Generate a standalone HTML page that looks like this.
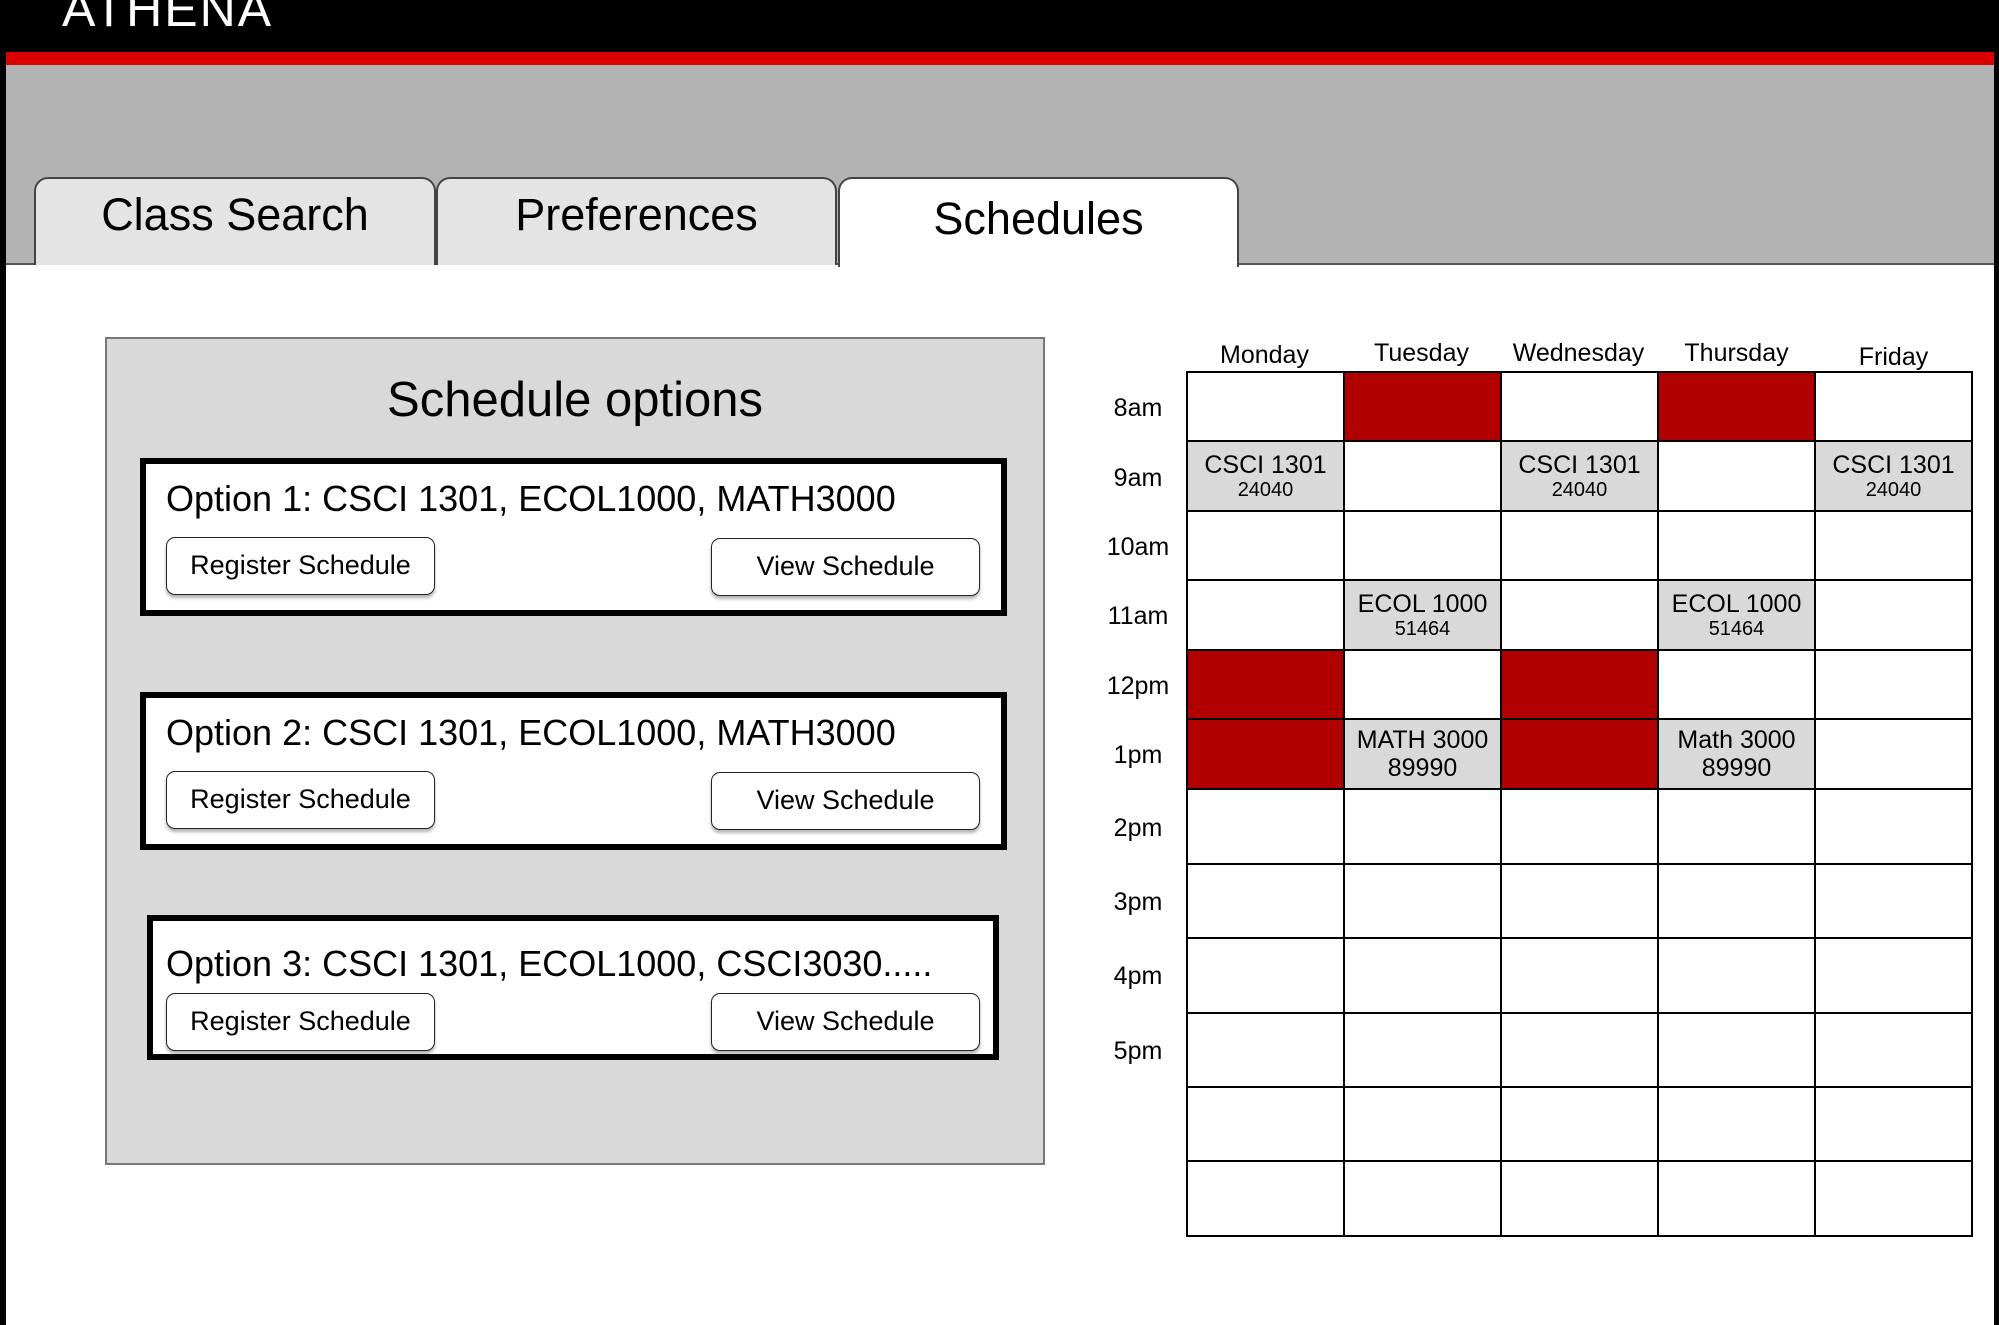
<!DOCTYPE html>
<html><head><meta charset="utf-8"><style>
*{margin:0;padding:0;box-sizing:border-box}
body{width:1999px;height:1325px;position:relative;overflow:hidden;background:#fff;font-family:"Liberation Sans",sans-serif;color:#000}
.a{position:absolute}
.tab{position:absolute;top:177px;height:88px;border:2px solid #444;border-bottom:none;border-radius:14px 14px 0 0;background:#e4e4e4;font-size:45px;text-align:center;line-height:72px}
.opt{position:absolute;border:6px solid #000;background:#fff}
.ot{position:absolute;left:20px;font-size:36px;white-space:nowrap}
.btn{position:absolute;width:269px;height:58px;border:1.5px solid #222;border-radius:9px;background:#fff;box-shadow:0 3px 3px rgba(0,0,0,.3);font-size:27px;text-align:center;line-height:54px}
table{position:absolute;left:1186px;top:371px;border-collapse:collapse;table-layout:fixed}
td{width:157px;border:2px solid #000;text-align:center;font-size:25px;line-height:28px;padding:0}
td small{font-size:20px;display:block;line-height:22px}
.r{background:#b00000}.g{background:#d9d9d9}
.day{position:absolute;top:341px;font-size:25px;width:157px;text-align:center}
.tm{position:absolute;left:1100px;width:76px;text-align:center;font-size:25px}
</style></head><body>
<div class="a" style="left:0;top:0;width:1999px;height:52px;background:#000"></div>
<div class="a" style="left:62px;top:-20px;color:#fff;font-size:50px;letter-spacing:2px">ATHENA</div>
<div class="a" style="left:0;top:52px;width:1999px;height:13px;background:#d80000"></div>
<div class="a" style="left:0;top:52px;width:6px;height:1273px;background:#000"></div>
<div class="a" style="left:1994px;top:52px;width:5px;height:1273px;background:#000"></div>
<div class="a" style="left:6px;top:65px;width:1988px;height:199px;background:#b3b3b3"></div>
<div class="a" style="left:6px;top:263px;width:1988px;height:2px;background:#555"></div>
<div class="tab" style="left:34px;width:402px">Class Search</div>
<div class="tab" style="left:436px;width:401px">Preferences</div>
<div class="tab" style="left:838px;width:401px;background:#fff;height:90px;line-height:80px">Schedules</div>

<div class="a" style="left:105px;top:337px;width:940px;height:828px;background:#d9d9d9;border:2px solid #777"></div>
<div class="a" style="left:105px;top:372px;width:940px;text-align:center;font-size:49px">Schedule options</div>

<div class="opt" style="left:140px;top:458px;width:867px;height:158px">
<div class="ot" style="top:14px">Option 1: CSCI 1301, ECOL1000, MATH3000</div>
<div class="btn" style="left:20px;top:73px">Register Schedule</div>
<div class="btn" style="left:565px;top:74px">View Schedule</div></div>
<div class="opt" style="left:140px;top:692px;width:867px;height:158px">
<div class="ot" style="top:14px">Option 2: CSCI 1301, ECOL1000, MATH3000</div>
<div class="btn" style="left:20px;top:73px">Register Schedule</div>
<div class="btn" style="left:565px;top:74px">View Schedule</div></div>
<div class="opt" style="left:147px;top:915px;width:852px;height:145px">
<div class="ot" style="top:22px;left:13px">Option 3: CSCI 1301, ECOL1000, CSCI3030.....</div>
<div class="btn" style="left:13px;top:72px">Register Schedule</div>
<div class="btn" style="left:558px;top:72px">View Schedule</div></div>

<div class="day" style="left:1186px">Monday</div>
<div class="day" style="left:1343px;top:339px">Tuesday</div>
<div class="day" style="left:1500px;top:339px">Wednesday</div>
<div class="day" style="left:1658px;top:339px">Thursday</div>
<div class="day" style="left:1815px;top:343px">Friday</div>

<div class="tm" style="top:394px">8am</div>
<div class="tm" style="top:464px">9am</div>
<div class="tm" style="top:533px">10am</div>
<div class="tm" style="top:602px">11am</div>
<div class="tm" style="top:672px">12pm</div>
<div class="tm" style="top:741px">1pm</div>
<div class="tm" style="top:814px">2pm</div>
<div class="tm" style="top:888px">3pm</div>
<div class="tm" style="top:962px">4pm</div>
<div class="tm" style="top:1037px">5pm</div>

<table>
<tr style="height:69px"><td></td><td class="r"></td><td></td><td class="r"></td><td></td></tr>
<tr style="height:70px"><td class="g">CSCI 1301<small>24040</small></td><td></td><td class="g">CSCI 1301<small>24040</small></td><td></td><td class="g">CSCI 1301<small>24040</small></td></tr>
<tr style="height:69px"><td></td><td></td><td></td><td></td><td></td></tr>
<tr style="height:70px"><td></td><td class="g">ECOL 1000<small>51464</small></td><td></td><td class="g">ECOL 1000<small>51464</small></td><td></td></tr>
<tr style="height:69px"><td class="r"></td><td></td><td class="r"></td><td></td><td></td></tr>
<tr style="height:70px"><td class="r"></td><td class="g">MATH 3000<br>89990</td><td class="r"></td><td class="g">Math 3000<br>89990</td><td></td></tr>
<tr style="height:75px"><td></td><td></td><td></td><td></td><td></td></tr>
<tr style="height:74px"><td></td><td></td><td></td><td></td><td></td></tr>
<tr style="height:75px"><td></td><td></td><td></td><td></td><td></td></tr>
<tr style="height:74px"><td></td><td></td><td></td><td></td><td></td></tr>
<tr style="height:74px"><td></td><td></td><td></td><td></td><td></td></tr>
<tr style="height:75px"><td></td><td></td><td></td><td></td><td></td></tr>
</table>
</body></html>
